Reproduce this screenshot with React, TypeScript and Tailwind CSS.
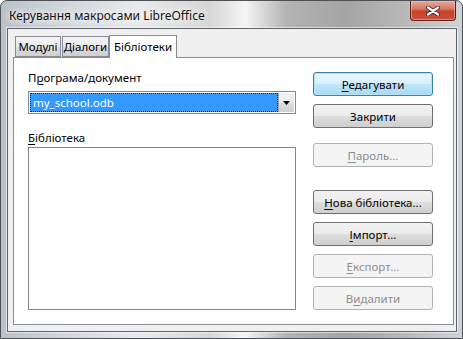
import React from 'react';

const ui = "font-['Noto_Sans','Liberation_Sans',sans-serif]";

function Label({ text, u }: { text: string; u: number }) {
  return (
    <>
      {text.slice(0, u)}
      <span className="underline underline-offset-2 decoration-1">{text[u]}</span>
      {text.slice(u + 1)}
    </>
  );
}

interface BtnProps {
  text: string;
  u?: number;
  primary?: boolean;
  disabled?: boolean;
  className?: string;
}

function Btn({ text, u, primary, disabled, className = '' }: BtnProps) {
  let look =
    'border-[#707070] text-black bg-[linear-gradient(180deg,#f2f2f2_0%,#ebebeb_48%,#dddddd_52%,#cfcfcf_100%)]';
  if (primary)
    look =
      'border-[#3c7fb1] text-black shadow-[inset_0_0_0_1px_#b5e3f9] bg-[linear-gradient(180deg,#eaf6fd_0%,#d9f0fc_48%,#bee6fd_52%,#a7d9f5_100%)]';
  if (disabled) look = 'border-[#adb2b5] text-[#8d8d8d] bg-[#f4f4f4]';
  return (
    <div
      className={`h-[24px] w-[120px] rounded-[3px] border flex items-center justify-center text-[11.5px] leading-none pt-px ${look} ${className}`}
    >
      {u === undefined ? text : <Label text={text} u={u} />}
    </div>
  );
}

function Tab({ text, active, className = '' }: { text: string; active?: boolean; className?: string }) {
  if (active)
    return (
      <div
        className={`relative z-10 h-[23px] -mb-px border border-b-0 border-[#898c95] bg-white flex items-center justify-center text-[11.5px] whitespace-nowrap ${className}`}
      >
        {text}
      </div>
    );
  return (
    <div
      className={`h-[21px] border border-[#898c95] bg-[linear-gradient(180deg,#f3f3f3_0%,#ebebeb_50%,#dddddd_51%,#cfcfcf_100%)] flex items-center justify-center text-[11.5px] whitespace-nowrap ${className}`}
    >
      {text}
    </div>
  );
}

export default function App() {
  return (
    <div
      className={`${ui} w-[463px] h-[339px] flex flex-col rounded-t-[7px] border border-[#4d5156] overflow-hidden bg-[linear-gradient(90deg,#b8c0c9_0%,#cfd4da_12%,#e9eaeb_30%,#d6d6d6_45%,#f4f4f4_53%,#b3b3b3_62%,#a4a4a4_75%,#b9b9b9_88%,#cfd2d6_100%)]`}
    >
      {/* title bar */}
      <div className="h-[27px] flex items-start shrink-0">
        <div className="pl-[8px] pt-[6px] text-[12px] text-[#111] [text-shadow:0_0_6px_#ffffff,0_0_10px_#ffffff]">
          Керування макросами LibreOffice
        </div>
        <div className="ml-auto mr-[6px] w-[46px] h-[20px] rounded-b-[4px] border border-t-0 border-[#5c1f17] bg-[linear-gradient(180deg,#e9a99b_0%,#d77a66_40%,#c7432c_55%,#c8513a_100%)] shadow-[inset_0_0_0_1px_rgba(255,200,190,0.5)] flex items-center justify-center">
          <svg width="14" height="10" viewBox="0 0 14 10">
            <path d="M2 1.5 L12 8.5 M12 1.5 L2 8.5" stroke="#4a2a26" strokeWidth="4" strokeLinecap="round" />
            <path d="M2 1.5 L12 8.5 M12 1.5 L2 8.5" stroke="#ffffff" strokeWidth="2.2" strokeLinecap="round" />
          </svg>
        </div>
      </div>

      {/* client area */}
      <div className="flex-1 ml-[6px] mr-[5px] mb-[6px] border border-[#5f6368] bg-[#f0f0f0] flex flex-col shadow-[0_0_0_1px_rgba(255,255,255,0.6)]">
        <div className="flex items-end pt-[6px] pl-[7px] shrink-0">
          <Tab text="Модулі" className="w-[46px]" />
          <Tab text="Діалоги" className="w-[47px] ml-px" />
          <Tab text="Бібліотеки" active className="w-[68px]" />
        </div>

        <div className="flex-1 ml-[5px] mr-[2px] mb-[6px] border border-[#898c95] bg-white flex pl-[14px] gap-[17px]">
          {/* left column */}
          <div className="w-[268px] flex flex-col pt-[12px]">
            <div className="h-[16px] text-[11.5px] leading-[16px]">
              <Label text="Програма/документ" u={1} />
            </div>
            <div className="mt-[5px] h-[23px] border border-[#828790] bg-white flex p-px">
              <div className="flex-1 bg-[#3399ff] outline-1 outline-dotted outline-offset-[-1px] outline-[#222] text-white text-[11.5px] leading-[19px] pl-[3px]">
                my_school.odb
              </div>
              <div className="w-[16px] bg-[linear-gradient(180deg,#f2f2f2_0%,#ebebeb_48%,#dddddd_52%,#cfcfcf_100%)] border-l border-[#a0a0a0] flex items-center justify-center">
                <svg width="7" height="4" viewBox="0 0 7 4">
                  <path d="M0 0 H7 L3.5 4 Z" fill="#000" />
                </svg>
              </div>
            </div>
            <div className="mt-[16px] h-[16px] text-[11.5px] leading-[16px]">
              <Label text="Бібліотека" u={0} />
            </div>
            <div className="mt-[1px] h-[163px] border border-[#828790] bg-white" />
          </div>

          {/* right column */}
          <div className="flex flex-col pt-[14px] gap-[8px]">
            <Btn text="Редагувати" u={0} primary />
            <Btn text="Закрити" />
            <Btn text="Пароль..." u={0} disabled className="mt-[7px]" />
            <Btn text="Нова бібліотека..." u={0} className="mt-[15px]" />
            <Btn text="Імпорт..." u={0} />
            <Btn text="Експорт..." u={0} disabled />
            <Btn text="Видалити" u={1} disabled />
          </div>
        </div>
      </div>
    </div>
  );
}
